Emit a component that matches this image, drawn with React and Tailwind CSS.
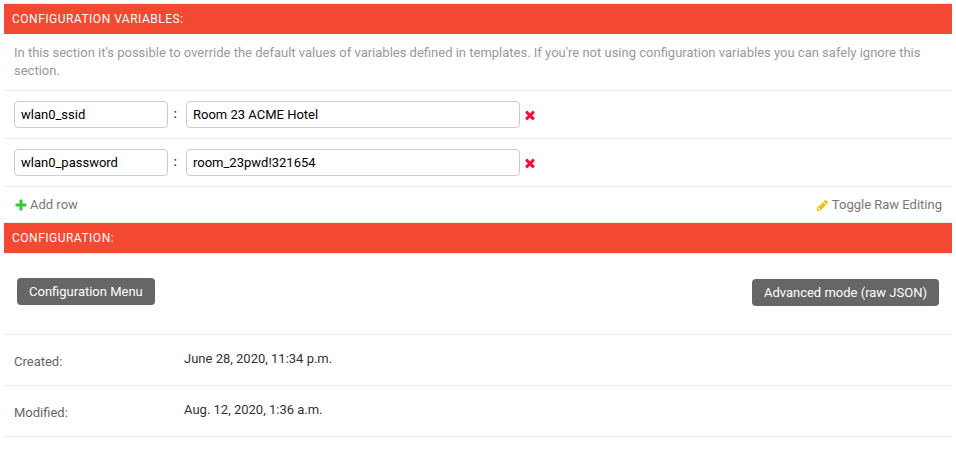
const paths = {
  plus: "M1600 796v192q0 40-28 68t-68 28h-416v416q0 40-28 68t-68 28h-192q-40 0-68-28t-28-68v-416h-416q-40 0-68-28t-28-68v-192q0-40 28-68t68-28h416v-416q0-40 28-68t68-28h192q40 0 68 28t28 68v416h416q40 0 68 28t28 68z",
  times:
    "M1490 1322q0 40-28 68l-136 136q-28 28-68 28t-68-28l-294-294-294 294q-28 28-68 28t-68-28l-136-136q-28-28-28-68t28-68l294-294-294-294q-28-28-28-68t28-68l136-136q28-28 68-28t68 28l294 294 294-294q28-28 68-28t68 28l136 136q28 28 28 68t-28 68l-294 294 294 294q28 28 28 68z",
  pencil:
    "M491 1536l91-91-235-235-91 91v107h128v128h107zm523-928q0-22-22-22-10 0-17 7l-542 542q-7 7-7 17 0 22 22 22 10 0 17-7l542-542q7-7 7-17zm-54-192l416 416-832 832h-416v-416zm683 96q0 53-37 90l-166 166-416-416 166-165q36-38 90-38 53 0 91 38l235 234q37 39 37 91z",
};

function Icon({ name, className }) {
  return (
    <svg viewBox="0 0 1792 1792" fill="currentColor" className={className}>
      <path d={paths[name]} />
    </svg>
  );
}

function SectionTitle({ children }) {
  return (
    <h2 className="h-[30px] bg-[#f34932] pl-2 text-[12px] leading-[30px] tracking-[0.5px] text-white uppercase">
      {children}
    </h2>
  );
}

function VariableRow({ name, value }) {
  return (
    <div className="flex h-12 items-center border-b border-[#eee] pl-2.5">
      <input
        defaultValue={name}
        className="h-[27px] w-[154px] rounded-[4px] border border-[#ccc] px-1.5 text-black outline-none"
      />
      <span className="w-[18px] pb-0.5 pl-[5.4px] font-medium text-[#333]">:</span>
      <input
        defaultValue={value}
        className="h-[27px] w-[334px] rounded-[4px] border border-[#ccc] px-1.5 text-black outline-none"
      />
      <button aria-label="Remove row" className="ml-[3px] text-[#f8093b]">
        <Icon name="times" className="block size-3.5" />
      </button>
    </div>
  );
}

function DateRow({ label, value }) {
  return (
    <div className="flex h-[51px] border-b border-[#eee] pl-2.5 leading-[16px]">
      <div className="w-[170px] pt-[19px] text-[#666]">{label}</div>
      <div className="pt-4 text-[#333]">{value}</div>
    </div>
  );
}

export default function App() {
  return (
    <main className="h-[455px] bg-white px-1 pt-[3px] font-['Roboto','Liberation_Sans',sans-serif] text-[13px]">
      <section className="border-t border-[#eee]">
        <SectionTitle>Configuration variables:</SectionTitle>
        <p className="h-[57px] border-b border-[#eee] px-2.5 pt-2.5 leading-[18px] text-[#999]">
          In this section it's possible to override the default values of variables defined in templates. If you're not
          using configuration variables you can safely ignore this section.
        </p>
        <VariableRow name="wlan0_ssid" value="Room 23 ACME Hotel" />
        <VariableRow name="wlan0_password" value="room_23pwd!321654" />
        <div className="flex h-9 items-center justify-between border-b border-[#eee] px-2.5 text-[#777]">
          <button className="flex items-center gap-[2.3px]">
            <Icon name="plus" className="mt-px -ml-[0.3px] size-3.5 text-[#32cd32]" />
            Add row
          </button>
          <button className="flex items-center gap-[2.5px]">
            <Icon name="pencil" className="mt-px size-[13px] text-[#f3bd09]" />
            Toggle Raw Editing
          </button>
        </div>
      </section>
      <section>
        <SectionTitle>Configuration:</SectionTitle>
        <div className="flex h-[82px] items-start justify-between border-y border-[#eee] pt-6 pr-[13px] pl-[13px]">
          <button className="h-[27px] rounded-[4px] bg-[#666] px-3 text-white">Configuration Menu</button>
          <button className="mt-px h-[27px] rounded-[4px] bg-[#666] px-3 text-white">Advanced mode (raw JSON)</button>
        </div>
        <DateRow label="Created:" value="June 28, 2020, 11:34 p.m." />
        <DateRow label="Modified:" value="Aug. 12, 2020, 1:36 a.m." />
      </section>
    </main>
  );
}
